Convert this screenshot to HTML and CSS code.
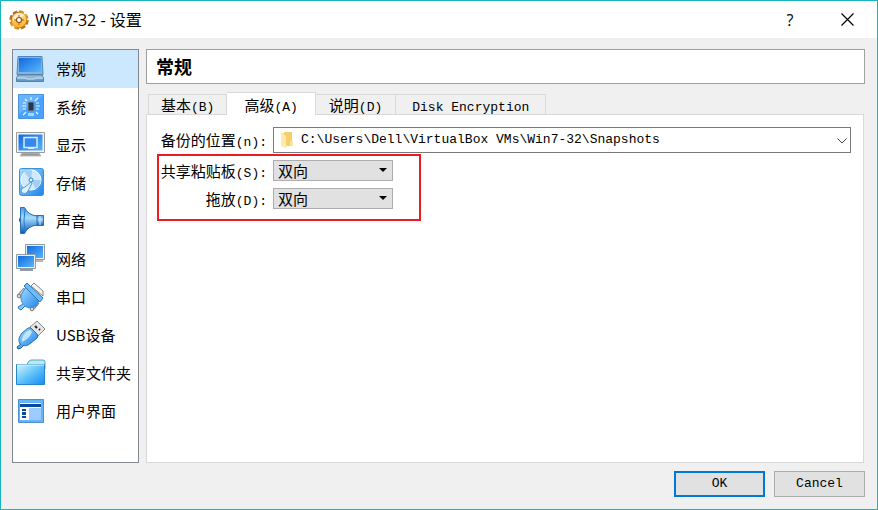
FILE: index.html
```html
<!DOCTYPE html>
<html lang="zh-CN">
<head>
<meta charset="utf-8">
<title>Win7-32 - 设置</title>
<link rel="stylesheet" href="styles.css">
</head>
<body>
<svg class="defs" aria-hidden="true">
  <defs>
    <linearGradient id="screen" x1="0" y1="0" x2="1" y2="1"><stop offset="0" stop-color="#1169dd"/><stop offset="1" stop-color="#58b6fc"/></linearGradient>
    <linearGradient id="sky" x1="0" y1="0" x2="1" y2="1"><stop offset="0" stop-color="#a5dcff"/><stop offset="1" stop-color="#1b83ea"/></linearGradient>
    <linearGradient id="metal" x1="0" y1="0" x2="0" y2="1"><stop offset="0" stop-color="#a5cbe9"/><stop offset="1" stop-color="#5b8dba"/></linearGradient>
    <linearGradient id="cone" x1="0" y1="0" x2="0" y2="1"><stop offset="0" stop-color="#4a9ade"/><stop offset=".4" stop-color="#a5dcff"/><stop offset="1" stop-color="#0b58b5"/></linearGradient>
    <linearGradient id="gold" x1="0" y1="0" x2="1" y2="1"><stop offset="0" stop-color="#8c501b"/><stop offset=".5" stop-color="#efa62d"/><stop offset="1" stop-color="#a85b08"/></linearGradient>
    <linearGradient id="brass" x1="0" y1="0" x2="0" y2="1"><stop offset="0" stop-color="#fbe3b0"/><stop offset=".5" stop-color="#fbc55a"/><stop offset="1" stop-color="#ffb01f"/></linearGradient>
    <linearGradient id="folder" x1="0" y1="0" x2="1" y2="1"><stop offset="0" stop-color="#d9f4ff"/><stop offset=".5" stop-color="#60c2fb"/><stop offset="1" stop-color="#168af0"/></linearGradient>
  </defs>
</svg>
<div class="window">
  <header class="titlebar">
    <svg class="app-icon" viewBox="0 0 20 20" aria-hidden="true">
      <circle cx="10" cy="10" r="8.400" fill="none" stroke="url(#gold)" stroke-width="2.600" stroke-dasharray="4.600 2"/>
      <circle cx="10" cy="10" r="7.800" fill="url(#brass)" stroke="url(#gold)"/>
      <path d="M4 8Q9 1 15 5Q12 9 4 11Z" fill="#fff6e0" opacity=".8"/>
      <circle cx="10" cy="10" r="2.500" fill="#fff" stroke="#85511c" stroke-width="1.200"/>
      <path d="M10 5v2M10 13v2M5 10h2M13 10h2" stroke="#a8651c"/>
    </svg>
    <h1>Win7-32 - 设置</h1>
    <button class="title-button help" type="button" aria-label="帮助">?</button>
    <button class="title-button" type="button" aria-label="关闭"><svg class="close" viewBox="0 0 13 13"><path d="M.5.5l12 12M12.5.5l-12 12" stroke="#000" stroke-width="1.2"/></svg></button>
  </header>
  <div class="content">
    <nav class="sidebar">
      <a class="current" href="#general"><svg viewBox="0 0 30 30" aria-hidden="true"><path d="M2 2.5h24l1 18H1z" fill="#83b5df" stroke="#5585af"/><path d="M3 4h22v14H3z" fill="url(#screen)"/><path d="M2 21h24l1.5 3v3.5H.5V24z" fill="url(#metal)" stroke="#59809f"/><path d="M1 24h8l2 1h7l2-1h7" fill="none" stroke="#d3e9f8"/></svg>常规</a>
      <a href="#system"><svg viewBox="0 0 30 30" aria-hidden="true"><path d="M2.500 2.500h25v24h-25z" fill="#48a2ff" stroke="#4a94dc"/><path d="M3 3h24L3 22z" fill="#a5d3ff" opacity=".35"/><path d="M12 10h6v9h-6z" fill="#263746" stroke="#7294b0"/><path d="M15 5v3M9 7l2 2M22 6l-3 3M7 11h3M6 14h4M7 17h3M20 11h3M20 14h4M20 17h3M7 23l3-3M22 22l-2-2M13 21v3M15 21v3M17 21v3" stroke="#e9f7ff" stroke-width="1.200"/></svg>系统</a>
      <a href="#display"><svg viewBox="0 0 30 30" aria-hidden="true"><path d="M6 23h17l2 3H4z" fill="#999" stroke="#bbb"/><path d="M.5 2.500h28v20H.5z" fill="#f3f3f3" stroke="#9b9b9b"/><path d="M2.500 4.500h24v16h-24z" fill="url(#screen)"/><path d="M8 7.500h13v10H8z" fill="#3589ee" stroke="#d9ecff" stroke-width="1.500"/><path d="M12 18h6" stroke="#d9ecff" stroke-width="2"/></svg>显示</a>
      <a href="#storage"><svg viewBox="0 0 30 30" aria-hidden="true"><rect x="3.500" y=".5" width="24" height="27" rx="2" fill="url(#sky)" stroke="#3b8fd8"/><circle cx="15" cy="12" r="10" fill="#cfe9ff" stroke="#fff"/><path d="M15 12L8 4Q12 1 16 2zM15 12l10 0q0 5-5 9z" fill="#74b4ec" opacity=".5"/><circle cx="15" cy="12" r="2" fill="#e8f7ff" stroke="#287fc5"/><path d="M5 23q0-3 4-4l6-5 1 1-4 8q-2 4-6 2z" fill="#e0f1ff" stroke="#5598d2"/></svg>存储</a>
      <a href="#audio"><svg viewBox="0 0 30 30" aria-hidden="true"><path d="M5 10q-3 4 0 8" fill="#2c62a0" stroke="#174887"/><path d="M20 9.500h7.500v10H20z" fill="url(#cone)" stroke="#2b6fb5"/><path d="M4.500 1.500h4Q12 9 21 10v9Q12 20 8.500 27.500h-4z" fill="url(#cone)" stroke="#2b6fb5"/><path d="M9 3Q7 14 9 26" fill="none" stroke="#2f7ac8"/><path d="M24 10v9" stroke="#d7f0ff"/></svg>声音</a>
      <a href="#network"><svg viewBox="0 0 30 30" aria-hidden="true"><path d="M9.500.5h19v15h-19z" fill="#eee" stroke="#8f9aa5"/><path d="M11 2h16v12H11z" fill="url(#screen)"/><path d="M16 17h11" stroke="#b1b8bf" stroke-width="2"/><path d="M.5 10.500h19v14H.5z" fill="#eee" stroke="#8f9aa5"/><path d="M2 12h16v11H2z" fill="url(#screen)"/><path d="M4 26h13" stroke="#9199a1" stroke-width="2"/></svg>网络</a>
      <a href="#serial"><svg viewBox="0 0 30 30" aria-hidden="true"><path d="M15 4l3-3 9 8v5z" fill="#f2f2f2" stroke="#888"/><path d="M3 14l6-7M17 26l5-6" stroke="#777" stroke-width="4"/><path d="M3 14l6-7M17 26l5-6" stroke="#ddd" stroke-width="2"/><path d="M5 13L10 5l14 12-4 7q-6 4-11 0-5-4-4-11z" fill="url(#sky)" stroke="#3b8ccc"/><path d="M8 4l3-3 16 15-3 4z" fill="#70bbf5" stroke="#2478b7"/><path d="M7 22l-5 3q1 3 3 3l4-4" fill="#82c9fa" stroke="#267abb"/><circle cx="3" cy="14" r="1.800" fill="#ddd" stroke="#777"/><circle cx="16" cy="27" r="1.800" fill="#ddd" stroke="#777"/></svg>串口</a>
      <a href="#usb"><svg viewBox="0 0 30 30" aria-hidden="true"><path d="M14 7l7-6 8 8-7 7z" fill="#e5e5e5" stroke="#888"/><path d="M19 6l2 2M23 9l1 1" stroke="#222" stroke-width="2"/><path d="M4 24q-3-5 2-11l6-5q2-1 4 1l5 5q2 2 0 4l-6 5q-6 5-11 1z" fill="url(#sky)" stroke="#2673b9"/><path d="M6 19q2-7 8-9l2 2q-2 6-10 10z" fill="#d5f1ff" opacity=".8"/><path d="M5 24l-4 3 1 2q3 0 6-4" fill="#5dacdf" stroke="#155eaa"/></svg>USB设备</a>
      <a href="#folders"><svg viewBox="0 0 30 30" aria-hidden="true"><path d="M10 8l3-5q1-1 3-1h11q2 0 2 2v7H10z" fill="#b9eaf7" stroke="#54a8bd"/><path d="M.5 6.500h28v20H.5z" fill="url(#folder)" stroke="#2486cd"/><path d="M1 7h27" stroke="#e3faff"/></svg>共享文件夹</a>
      <a href="#interface"><svg viewBox="0 0 30 30" aria-hidden="true"><path d="M2.500 3.500h25v23h-25z" fill="#66b3f8" stroke="#4b90d5"/><path d="M4 7h21v17H4z" fill="#fff"/><path d="M4 8h21v3H4z" fill="#0949a5"/><path d="M13 12h12v12H13z" fill="#9dcaff"/><path d="M6 13h4v2H6zM6 16h4v3H6zM6 20h4v2H6z" fill="#0949a5"/></svg>用户界面</a>
    </nav>
    <main class="main">
      <h2>常规</h2>
      <div class="tabs" role="tablist">
        <button type="button" role="tab" aria-selected="false">基本<span class="mono">(B)</span></button>
        <button type="button" role="tab" aria-selected="true">高级<span class="mono">(A)</span></button>
        <button type="button" role="tab" aria-selected="false">说明<span class="mono">(D)</span></button>
        <button type="button" role="tab" aria-selected="false"><span class="mono">Disk Encryption</span></button>
      </div>
      <form class="pane" role="tabpanel" id="settings">
        <div class="row location">
          <label for="location">备份的位置<span class="mono">(n):</span></label>
          <div class="field wide">
            <svg class="folder" viewBox="0 0 12 16" aria-hidden="true"><path d="M0 1h5v14L0 13z" fill="#ffe69c"/><path d="M3 0h8v14H3z" fill="#f4cf6b"/><path d="M0 1l5 3v12l-5-2z" fill="#ffe9a8"/><path d="M9 9h3v5H9z" fill="#ffe397"/></svg>
            <select id="location" class="mono"><option>C:\Users\Dell\VirtualBox VMs\Win7-32\Snapshots</option></select>
            <svg class="arrow" viewBox="0 0 10 6" aria-hidden="true"><path d="M.5.5L5 5 9.500.5" fill="none" stroke="#444"/></svg>
          </div>
        </div>
        <div class="marked">
          <div class="row">
            <label for="clipboard">共享粘贴板<span class="mono">(S):</span></label>
            <div class="field"><select id="clipboard"><option>双向</option></select><svg class="arrow" viewBox="0 0 8 4" aria-hidden="true"><path d="M0 0h8L4 4z"/></svg></div>
          </div>
          <div class="row">
            <label for="dragdrop">拖放<span class="mono">(D):</span></label>
            <div class="field"><select id="dragdrop"><option>双向</option></select><svg class="arrow" viewBox="0 0 8 4" aria-hidden="true"><path d="M0 0h8L4 4z"/></svg></div>
          </div>
        </div>
      </form>
    </main>
  </div>
  <footer class="actions">
    <button class="mono primary" type="submit" form="settings">OK</button>
    <button class="mono" type="button">Cancel</button>
  </footer>
</div>
</body>
</html>
```
FILE: styles.css
```css
* { box-sizing: border-box; }
body {
  margin: 0;
  font: 15px/20px "Noto Sans CJK SC", sans-serif;
  color: #000;
}
button, select { font: inherit; color: inherit; margin: 0; }
.defs { position: absolute; width: 0; height: 0; }
.mono { font-family: "Liberation Mono", "Noto Sans CJK SC", monospace; font-size: 13px; }
span.mono { line-height: 1; }

.window {
  min-height: 100vh;
  display: flex;
  flex-direction: column;
  border: 1px solid #18b5c1;
  background: #f0f0f0;
}
.titlebar {
  display: flex;
  align-items: center;
  height: 37px;
  padding: 0 8px;
  background: #fff;
}
.app-icon { width: 20px; height: 20px; margin-right: 6px; }
h1 { flex: 1; margin: 0; font-size: 16px; font-weight: 400; font-family: "Open Sans", "Noto Sans CJK SC", sans-serif; }
.title-button {
  display: flex;
  align-items: center;
  justify-content: center;
  width: 44px;
  height: 36px;
  padding: 0;
  border: 0;
  background: none;
}
.title-button.help { width: 70px; font-family: "Open Sans", sans-serif; font-size: 16px; }
.close { width: 13px; height: 13px; }

.content { flex: 1; display: flex; gap: 7px; padding: 11px 12px 0 11px; }
.sidebar {
  width: 127px;
  flex: none;
  border: 1px solid #828790;
  background: #fff;
}
.sidebar a {
  display: flex;
  align-items: center;
  gap: 10px;
  height: 38px;
  padding-left: 3px;
  color: inherit;
  text-decoration: none;
  white-space: nowrap;
}
.sidebar a.current { background: #cce8ff; }
.sidebar svg { width: 30px; height: 30px; flex: none; }

.main { flex: 1; min-width: 0; display: flex; flex-direction: column; }
h2 {
  margin: 0 0 8px;
  padding: 0 9px;
  border: 1px solid #a0a0a0;
  background: #fff;
  font-size: 18px;
  line-height: 33px;
}
.tabs { display: flex; align-items: flex-end; padding-left: 2px; }
.tabs button {
  height: 20px;
  padding: 0 13px;
  border: 1px solid #d9d9d9;
  border-width: 1px 1px 0 0;
  background: #f0f0f0;
  line-height: 19px;
  white-space: nowrap;
}
.tabs button:first-child { border-left-width: 1px; padding: 0 12px; }
.tabs button:last-child { padding: 0 16px; }
.tabs button[aria-selected="true"] {
  height: 23px;
  margin-bottom: -1px;
  padding: 0 17px;
  background: #fff;
  z-index: 1;
}
.pane {
  flex: 1;
  display: flex;
  flex-direction: column;
  gap: 7px;
  margin-right: 1px;
  padding: 12px;
  border: 1px solid #d9d9d9;
  background: #fff;
}
.row { display: flex; align-items: center; gap: 6px; }
.row label { width: 108px; flex: none; text-align: right; white-space: nowrap; line-height: 20px; }
.field { position: relative; width: 120px; }
.field.wide { width: auto; flex: 1; }
.field select {
  display: block;
  width: 100%;
  height: 21px;
  padding: 0 4px;
  border: 1px solid #adadad;
  border-radius: 0;
  background: #e1e1e1;
  appearance: none;
  line-height: 19px;
}
.field.wide select {
  height: 26px;
  padding: 0 27px;
  border-color: #7a7a7a;
  background: #fff;
  line-height: 24px;
}
.arrow, .folder { position: absolute; pointer-events: none; }
.arrow { top: 8px; right: 6px; width: 8px; height: 4px; }
.wide .arrow { top: 11px; right: 4px; width: 10px; height: 6px; }
.folder { top: 5px; left: 8px; width: 12px; height: 16px; }
.marked { position: relative; display: flex; flex-direction: column; gap: 7px; width: 264px; }
.marked::after {
  content: "";
  position: absolute;
  inset: -6px 2px -12px -2px;
  border: 2px solid #ed1c24;
  pointer-events: none;
}
.actions { display: flex; justify-content: flex-end; gap: 9px; padding: 8px 12px 12px; }
.actions button {
  width: 91px;
  height: 26px;
  padding: 0;
  border: 1px solid #adadad;
  background: #e1e1e1;
}
.actions .primary { border: 2px solid #0078d7; }
```
